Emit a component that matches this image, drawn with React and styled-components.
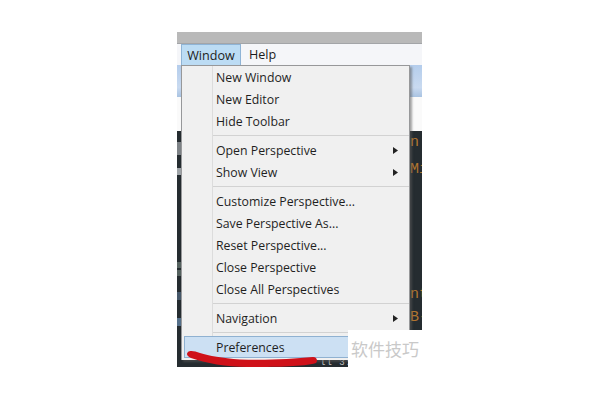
import React from "react";
import styled, { createGlobalStyle } from "styled-components";

const Global = createGlobalStyle`
  html, body { margin: 0; background: #fff; }
  body { font-family: "Open Sans", "Liberation Sans", sans-serif; }
`;
const Page = styled.div`
  width: 600px; height: 400px; padding: 32px 0 0 177px; box-sizing: border-box; overflow: hidden; background: #fff;
`;
const Shot = styled.div`
  position: relative; width: 245px; height: 335px; display: flex; flex-direction: column; overflow: hidden; background: #fff;
`;
const TitleStrip = styled.div`
  height: 11px; flex: none; background: #b9b9b9; border-bottom: 1px solid #a3a5a8;
`;
const MenuBar = styled.div`
  height: 21px; flex: none; display: flex; align-items: stretch; padding-left: 4px; background: #f5f6f9;
  font-size: 12.6px; color: #1c1c1c;
`;
const MenuTitle = styled.div`
  display: flex; align-items: center; padding: 0 8px; box-sizing: border-box;
  width: ${p => p.$open ? "60px" : "auto"}; justify-content: center;
  ${p => p.$open && "background: #bcdcf4; border: 1px solid #8fb4d6; border-bottom: none;"}
`;
const Toolbar = styled.div`
  height: 32px; flex: none; background: linear-gradient(#b4cdec, #c9daf0 70%, #a9c3e2);
`;
const WhiteBand = styled.div`
  height: 34px; flex: none; background: #fafafa;
`;
const Editor = styled.div`
  flex: 1; background: #252c30; position: relative;
`;
const Code = styled.span`
  position: absolute; right: 0; top: ${p => p.$y}px; width: 12px; overflow: hidden;
  font-family: "Liberation Mono", monospace; font-size: 15px; line-height: 16px; color: #b3762f; white-space: nowrap;
`;
const Gutter = styled.span`
  position: absolute; left: 0; top: ${p => p.$y}px; width: 4px; height: ${p => p.$h}px; background: ${p => p.$c};
`;
const Footer = styled.div`
  position: absolute; left: 143px; bottom: 0; font-family: "Liberation Mono", monospace; font-size: 9px; line-height: 7px;
  height: 7px; overflow: hidden; color: #c9c9c9; letter-spacing: 1px; white-space: nowrap;
`;
const Menu = styled.div`
  position: absolute; left: 4px; top: 33px; width: 229px; height: 295px; box-sizing: border-box;
  background: #f0f0f0; border: 1px solid #97989a; border-bottom: none; display: flex; flex-direction: column;
  box-shadow: 2px 2px 2px rgba(90,90,90,.55); font-size: 12.3px; color: #1f1f1f;
`;
const GutterLine = styled.div`
  position: absolute; left: 30px; top: 0; bottom: 0; width: 1px; background: #dcdcdc;
`;
const Group = styled.div`
  display: flex; flex-direction: column; position: relative;
`;
const Row = styled.div`
  position: relative; height: 22px; display: flex; align-items: center; justify-content: space-between;
  padding: 0 11px 0 34px; white-space: nowrap;
`;
const Divider = styled.div`
  height: 1px; margin: 3px 0 3px 31px; background: #d2d2d2; flex: none;
`;
const SelectedRow = styled(Row)`
  height: 22px; margin-left: 2px; padding-left: 31px; background: #cce0f3; border: 1px solid #8fb1d1;
  border-right: none; box-sizing: border-box;
`;
const Arrow = styled.svg`
  width: 5px; height: 7px; flex: none; fill: #222;
`;
const Stroke = styled.svg`
  position: absolute; left: 0; top: 0; width: 245px; height: 335px; pointer-events: none;
`;
const Watermark = styled.div`
  position: absolute; left: 171px; top: 298px; width: 74px; height: 37px; background: #fff; padding: 7px 0 0 3px; box-sizing: border-box;
  font-family: "Noto Sans CJK SC", sans-serif; font-size: 17px; line-height: 24px; color: #c9c9c9; white-space: nowrap;
`;

const Item = ({ label, sub }) => (
  <Row>
    {label}
    {sub && <Arrow viewBox="0 0 5 7"><path d="M0 0L5 3.5L0 7Z" /></Arrow>}
  </Row>
);

export default function App() {
  return (
    <Page>
      <Global />
      <Shot>
        <TitleStrip />
        <MenuBar>
          <MenuTitle $open>Window</MenuTitle>
          <MenuTitle>Help</MenuTitle>
        </MenuBar>
        <Toolbar />
        <WhiteBand />
        <Editor>
          <Gutter $y={11} $h={13} $c="#7d8286" />
          <Gutter $y={37} $h={7} $c="#9ea3a7" />
          <Gutter $y={131} $h={6} $c="#55625f" />
          <Gutter $y={139} $h={6} $c="#55625f" />
          <Gutter $y={161} $h={8} $c="#46586a" />
          <Gutter $y={187} $h={8} $c="#55708a" />
          <Code $y={4}>n</Code>
          <Code $y={31}>Mi</Code>
          <Code $y={156}>nt</Code>
          <Code $y={179}>B-</Code>
          <Footer>ll 3:</Footer>
        </Editor>
        <Menu>
          <GutterLine />
          <Group>
            <Item label="New Window" />
            <Item label="New Editor" />
            <Item label="Hide Toolbar" />
          </Group>
          <Divider />
          <Group>
            <Item label="Open Perspective" sub />
            <Item label="Show View" sub />
          </Group>
          <Divider />
          <Group>
            <Item label="Customize Perspective..." />
            <Item label="Save Perspective As..." />
            <Item label="Reset Perspective..." />
            <Item label="Close Perspective" />
            <Item label="Close All Perspectives" />
          </Group>
          <Divider />
          <Group>
            <Item label="Navigation" sub />
          </Group>
          <Divider />
          <SelectedRow>Preferences</SelectedRow>
        </Menu>
        <Stroke viewBox="0 0 245 335">
          <path d="M11 320 C13 318 18 319 23 321 C32 324 45 326 63 327.5 C90 328.5 115 327 136 325 C140 325 141 329 139 331 C125 335 95 335 70 335 C50 335 28 331 14 326 C10 324 9 322 11 320Z" fill="#cf1119" />
        </Stroke>
        <Watermark>软件技巧</Watermark>
      </Shot>
    </Page>
  );
}
